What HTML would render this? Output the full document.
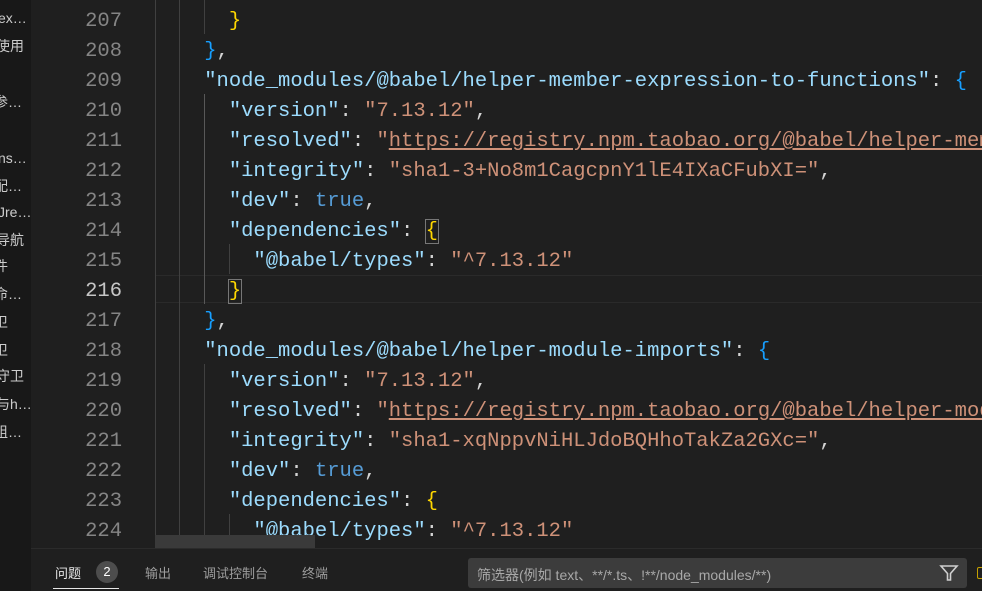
<!DOCTYPE html>
<html><head><meta charset="utf-8"><style>
*{margin:0;padding:0;box-sizing:border-box}
body{width:982px;height:591px;overflow:hidden;background:#1f1f1f;position:relative;font-family:"Liberation Sans","Noto Sans CJK SC",sans-serif}
#side{position:absolute;left:0;top:0;width:31px;height:591px;background:#181818;overflow:hidden}
#side div{position:absolute;left:0;font-size:14px;color:#cccccc;white-space:nowrap;line-height:20px}
#gut{position:absolute;left:31px;top:0;width:124px;height:548px;background:#1f1f1f}
#code{position:absolute;left:155px;top:0;width:827px;height:548px;background:#1f1f1f;overflow:hidden}
.ln{position:absolute;right:33px;width:80px;text-align:right;font-family:"Liberation Mono",monospace;font-size:20.5px;color:#858585;line-height:30px}
.l{position:absolute;left:0;white-space:pre;font-family:"Liberation Mono",monospace;font-size:20.5px;line-height:30px;color:#d4d4d4}
.k{color:#9cdcfe}.s{color:#ce9178}.y{color:#ffd700}.b{color:#179fff}.t{color:#569cd6}
.u{text-decoration:underline;text-decoration-color:#ce9178}
.g{position:absolute;width:1px;background:#404040}
#panel{position:absolute;left:31px;top:548px;width:951px;height:43px;background:#1f1f1f;border-top:1px solid #2b2b2b}
.tab{position:absolute;top:14px;font-size:13px;color:#9d9d9d}
#gut .ln,#code .l{margin-top:3px}
</style></head><body>
<div id="side">
<div style="top:8px;left:-2px">ex…</div>
<div style="top:36px;left:-4px">使用</div>
<div style="top:92px;left:-6px">参…</div>
<div style="top:148px;left:-2px">ns…</div>
<div style="top:176px;left:-6px">配…</div>
<div style="top:202px;left:-2px">Jre…</div>
<div style="top:230px;left:-4px">导航</div>
<div style="top:256px;left:-6px">件</div>
<div style="top:284px;left:-6px">命…</div>
<div style="top:312px;left:-6px">卫</div>
<div style="top:340px;left:-6px">卫</div>
<div style="top:366px;left:-4px">守卫</div>
<div style="top:394px;left:-4px">与h…</div>
<div style="top:422px;left:-6px">组…</div>
</div>
<div id="gut">
<div class="ln" style="top:4px">207</div>
<div class="ln" style="top:34px">208</div>
<div class="ln" style="top:64px">209</div>
<div class="ln" style="top:94px">210</div>
<div class="ln" style="top:124px">211</div>
<div class="ln" style="top:154px">212</div>
<div class="ln" style="top:184px">213</div>
<div class="ln" style="top:214px">214</div>
<div class="ln" style="top:244px">215</div>
<div class="ln" style="top:274px;color:#c6c6c6">216</div>
<div class="ln" style="top:304px">217</div>
<div class="ln" style="top:334px">218</div>
<div class="ln" style="top:364px">219</div>
<div class="ln" style="top:394px">220</div>
<div class="ln" style="top:424px">221</div>
<div class="ln" style="top:454px">222</div>
<div class="ln" style="top:484px">223</div>
<div class="ln" style="top:514px">224</div>
</div>
<div id="code">
<div style="position:absolute;left:0;top:275px;width:827px;height:28px;border-top:1px solid #2a2a2a;border-bottom:1px solid #2a2a2a"></div>
<div class="g" style="left:0;top:0;height:548px"></div>
<div class="g" style="left:24px;top:0;height:548px"></div>
<div class="g" style="left:49px;top:0;height:34px"></div>
<div class="g" style="left:49px;top:94px;height:210px;background:#585858"></div>
<div class="g" style="left:49px;top:364px;height:184px"></div>
<div class="g" style="left:74px;top:244px;height:30px"></div>
<div class="g" style="left:74px;top:514px;height:34px"></div>
<div class="l" style="top:4px">      <span class="y">}</span></div>
<div class="l" style="top:34px">    <span class="b">}</span>,</div>
<div class="l" style="top:64px">    <span class="k">"node_modules/@babel/helper-member-expression-to-functions"</span>: <span class="b">{</span></div>
<div class="l" style="top:94px">      <span class="k">"version"</span>: <span class="s">"7.13.12"</span>,</div>
<div class="l" style="top:124px">      <span class="k">"resolved"</span>: <span class="s">"<span class="u">https://registry.npm.taobao.org/@babel/helper-member-expression</span></span></div>
<div class="l" style="top:154px">      <span class="k">"integrity"</span>: <span class="s">"sha1-3+No8m1CagcpnY1lE4IXaCFubXI="</span>,</div>
<div class="l" style="top:184px">      <span class="k">"dev"</span>: <span class="t">true</span>,</div>
<div class="l" style="top:214px">      <span class="k">"dependencies"</span>: <span class="y" style="outline:1px solid #777">{</span></div>
<div class="l" style="top:244px">        <span class="k">"@babel/types"</span>: <span class="s">"^7.13.12"</span></div>
<div class="l" style="top:274px">      <span class="y" style="outline:1px solid #777">}</span></div>
<div class="l" style="top:304px">    <span class="b">}</span>,</div>
<div class="l" style="top:334px">    <span class="k">"node_modules/@babel/helper-module-imports"</span>: <span class="b">{</span></div>
<div class="l" style="top:364px">      <span class="k">"version"</span>: <span class="s">"7.13.12"</span>,</div>
<div class="l" style="top:394px">      <span class="k">"resolved"</span>: <span class="s">"<span class="u">https://registry.npm.taobao.org/@babel/helper-module-imports</span></span></div>
<div class="l" style="top:424px">      <span class="k">"integrity"</span>: <span class="s">"sha1-xqNppvNiHLJdoBQHhoTakZa2GXc="</span>,</div>
<div class="l" style="top:454px">      <span class="k">"dev"</span>: <span class="t">true</span>,</div>
<div class="l" style="top:484px">      <span class="k">"dependencies"</span>: <span class="y">{</span></div>
<div class="l" style="top:514px">        <span class="k">"@babel/types"</span>: <span class="s">"^7.13.12"</span></div>
<div style="position:absolute;left:0;top:535px;width:160px;height:13px;background:#3a3a3a"></div>
</div>
<div id="panel">
<div class="tab" style="left:24px;color:#e7e7e7">问题</div>
<div style="position:absolute;left:65px;top:12px;width:22px;height:22px;border-radius:11px;background:#4d4d4d;color:#fff;font-size:13px;text-align:center;line-height:22px">2</div>
<div style="position:absolute;left:22px;top:39px;width:66px;height:1px;background:#e7e7e7"></div>
<div class="tab" style="left:114px">输出</div>
<div class="tab" style="left:172px">调试控制台</div>
<div class="tab" style="left:271px">终端</div>
<div style="position:absolute;left:437px;top:9px;width:499px;height:30px;background:#3c3c3c;border-radius:3px">
<div style="position:absolute;left:9px;top:7px;font-size:14px;color:#a8a8a8;white-space:nowrap">筛选器(例如 text、**/*.ts、!**/node_modules/**)</div>
<svg style="position:absolute;left:471px;top:5px" width="20" height="20" viewBox="0 0 20 20"><path d="M2 3H18L11.5 10.5V17H8.5V10.5Z" fill="none" stroke="#d0d0d0" stroke-width="1.6"/></svg>
</div>
<div style="position:absolute;left:946px;top:18px;width:8px;height:12px;border:1px solid #c5a000;border-radius:2px"></div>
</div>
</body></html>
